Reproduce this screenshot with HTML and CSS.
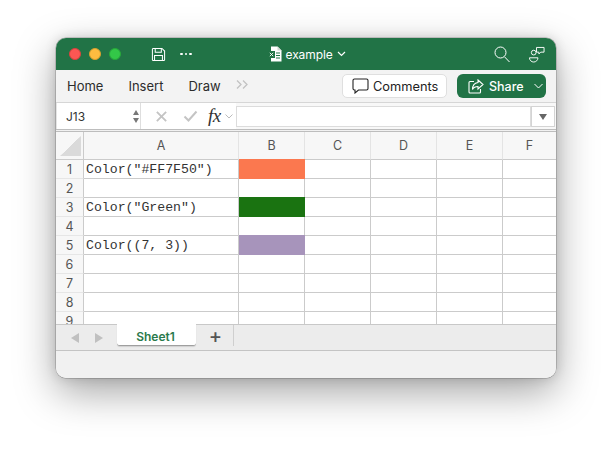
FILE: index.html
```html
<!DOCTYPE html>
<html lang="en">
<head>
<meta charset="utf-8">
<title>example</title>
<link rel="stylesheet" href="styles.css">
</head>
<body>
<div class="window">
  <header class="titlebar">
    <div class="lights"><i class="light red"></i><i class="light amber"></i><i class="light green"></i></div>
    <svg class="save" width="15" height="15" viewBox="0 0 16 16" fill="none" stroke="#fff" stroke-width="1.1"><path d="M1.500 2.500a1 1 0 0 1 1-1h9.200l2.800 2.800v9.200a1 1 0 0 1-1 1h-11a1 1 0 0 1-1-1z"/><path d="M4.500 1.500v4h6.500v-4M3.800 14.500v-5.500h8.400v5.500"/></svg>
    <div class="dots"><i></i><i></i><i></i></div>
    <div class="doc">
      <svg width="14" height="16" viewBox="0 0 14 16"><path d="M3 .5h6.500l4 4v11h-10.500z" fill="#fff"/><path d="M9.500.5v4h4" fill="#cfd8d2"/><path d="M8 7h4M8 9.500h4M8 12h4" stroke="#217346" stroke-width="1"/><rect x="0" y="5" width="7" height="7" fill="#217346"/><path d="M1.800 6.800l3.400 3.400M5.200 6.800l-3.400 3.400" stroke="#fff" stroke-width=".9"/></svg>
      <span class="doc-name">example</span>
      <svg width="9" height="6" viewBox="0 0 9 6" fill="none" stroke="#fff" stroke-width="1.200"><path d="M1 1l3.500 3.500L8 1"/></svg>
    </div>
    <svg class="search" width="16" height="17" viewBox="0 0 16 17" fill="none" stroke="#fff" stroke-width="1"><circle cx="6.500" cy="6.500" r="5.500"/><path d="M10.500 10.800l5 5.200"/></svg>
    <svg class="people" width="16" height="17" viewBox="0 0 17 17" fill="none" stroke="#fff" stroke-width="1"><circle cx="5" cy="6.500" r="2.500"/><path d="M.5 12h9a4.500 4.500 0 0 1-9 0z"/><path d="M8 1h8v5h-3.500l-2 2v-2h-2.500z"/></svg>
  </header>

  <nav class="ribbon">
    <span class="tab-label">Home</span>
    <span class="tab-label">Insert</span>
    <span class="tab-label">Draw</span>
    <svg class="more" width="13" height="9" viewBox="0 0 13 9" fill="none" stroke="#c2c2c2" stroke-width="1.300"><path d="M1 .5l4 4-4 4M7 .5l4 4-4 4"/></svg>
    <button class="comments">
      <svg width="17" height="16" viewBox="0 0 17 16" fill="none" stroke="#222" stroke-width="1.100"><path d="M2.500 1h12a1.500 1.500 0 0 1 1.500 1.500v8a1.500 1.500 0 0 1-1.500 1.500h-8l-3.500 3v-3h-.5a1.500 1.500 0 0 1-1.500-1.500v-8a1.500 1.500 0 0 1 1.500-1.500z"/></svg>
      Comments
    </button>
    <button class="share">
      <svg width="16" height="15" viewBox="0 0 16 15" fill="none" stroke="#fff" stroke-width="1.100"><path d="M6 2.500h-4a1 1 0 0 0-1 1v9.500a1 1 0 0 0 1 1h9.500a1 1 0 0 0 1-1v-3"/><path d="M10 1l5 4.500-5 4.500v-2.500c-3 0-4.500 1-5.500 3 0-4 2-6.500 5.500-7z"/></svg>
      <span>Share</span>
      <svg class="share-caret" width="9" height="6" viewBox="0 0 9 6" fill="none" stroke="#fff" stroke-width="1"><path d="M.5 1l4 4 4-4"/></svg>
    </button>
  </nav>

  <section class="formula">
    <div class="namebox">
      <span>J13</span>
      <div class="stepper"><i class="up"></i><i class="down"></i></div>
    </div>
    <div class="fx-tools">
      <svg width="13" height="13" viewBox="0 0 14 14" stroke="#c4c4c4" stroke-width="2" fill="none"><path d="M2 2l10 10M12 2l-10 10"/></svg>
      <svg width="15" height="14" viewBox="0 0 15 14" stroke="#c4c4c4" stroke-width="2" fill="none"><path d="M1.500 7.500l4 4 8-9"/></svg>
      <span class="fx">fx</span>
      <svg width="8" height="5" viewBox="0 0 8 5" stroke="#bbb" stroke-width="1" fill="none"><path d="M.5.500l3.500 3.500 3.500-3.500"/></svg>
    </div>
    <div class="input"></div>
    <div class="expand"><i></i></div>
  </section>

  <main class="sheet">
    <div class="corner"><i></i></div>
    <div class="ch">A</div><div class="ch">B</div><div class="ch">C</div><div class="ch">D</div><div class="ch">E</div><div class="ch last">F</div>

    <div class="rh">1</div><div class="c mono">Color("#FF7F50")</div><div class="c coral"></div><div class="c"></div><div class="c"></div><div class="c"></div><div class="c last"></div>
    <div class="rh">2</div><div class="c"></div><div class="c"></div><div class="c"></div><div class="c"></div><div class="c"></div><div class="c last"></div>
    <div class="rh">3</div><div class="c mono">Color("Green")</div><div class="c leaf"></div><div class="c"></div><div class="c"></div><div class="c"></div><div class="c last"></div>
    <div class="rh">4</div><div class="c"></div><div class="c"></div><div class="c"></div><div class="c"></div><div class="c"></div><div class="c last"></div>
    <div class="rh">5</div><div class="c mono">Color((7, 3))</div><div class="c lilac"></div><div class="c"></div><div class="c"></div><div class="c"></div><div class="c last"></div>
    <div class="rh">6</div><div class="c"></div><div class="c"></div><div class="c"></div><div class="c"></div><div class="c"></div><div class="c last"></div>
    <div class="rh">7</div><div class="c"></div><div class="c"></div><div class="c"></div><div class="c"></div><div class="c"></div><div class="c last"></div>
    <div class="rh">8</div><div class="c"></div><div class="c"></div><div class="c"></div><div class="c"></div><div class="c"></div><div class="c last"></div>
    <div class="rh">9</div><div class="c"></div><div class="c"></div><div class="c"></div><div class="c"></div><div class="c"></div><div class="c last"></div>
  </main>

  <footer class="tabs">
    <div class="arrows"><i class="prev"></i><i class="next"></i></div>
    <div class="sheet-tab">Sheet1</div>
    <div class="add">+</div>
  </footer>
  <div class="status"></div>
</div>
</body>
</html>
```

FILE: styles.css
```css
* { box-sizing: border-box; }
html, body { margin: 0; padding: 0; background: #fff; }
body { width: 612px; height: 452px; overflow: hidden; padding: 38px 56px 0; font-family: Inter, "Liberation Sans", sans-serif; }
i { display: block; }
button { font-family: inherit; margin: 0; }

.window {
  width: 500px; height: 340px; border-radius: 10px; overflow: hidden; background: #f1f1f1;
  display: flex; flex-direction: column;
  box-shadow: 0 0 0 .5px rgba(0,0,0,.3), 0 14px 40px rgba(0,0,0,.36), 0 0 12px rgba(0,0,0,.14);
}

.titlebar { height: 32px; flex: none; background: #217346; display: flex; align-items: center; padding-left: 13px; color: #fff; }
.lights { display: flex; gap: 8px; }
.light { width: 12px; height: 12px; border-radius: 50%; }
.red { background: #fc5753; border: .5px solid #d9423e; }
.amber { background: #fdbc40; border: .5px solid #d99f2e; }
.green { background: #33c748; border: .5px solid #27a83a; }
.save { margin-left: 30px; }
.dots { display: flex; gap: 2px; margin-left: 14px; }
.dots i { width: 2.500px; height: 2.500px; border-radius: 50%; background: #fff; }
.doc { display: flex; align-items: center; margin-left: 76px; gap: 4px; }
.doc-name { font-size: 12px; letter-spacing: -.1px; }
.search { margin-left: auto; }
.people { margin: 0 11px 0 19px; }

.ribbon { height: 33px; flex: none; background: #f3f3f3; display: flex; align-items: center; padding: 0 10px 0 11px; border-bottom: 1px solid #d6d6d6; }
.tab-label { font-size: 13px; color: #2c2c2c; margin-right: 25px; }
.tab-label:nth-child(3) { margin-right: 15px; }
.more { margin-top: -4px; }
.comments { margin-left: auto; height: 24px; width: 105px; border: 1px solid #dfdfdf; border-radius: 5px; background: #fff; display: flex; align-items: center; gap: 4px; padding: 0 0 0 9px; font-size: 12.800px; color: #222; }
.share { margin-left: 10px; height: 24px; width: 89px; border: 0; border-radius: 6px; background: #217346; color: #fff; display: flex; align-items: center; padding: 0 0 0 11px; gap: 5px; font-size: 12.500px; font-weight: 500; }
.share-caret { margin-left: 5px; }

.formula { height: 27px; flex: none; display: flex; align-items: stretch; background: #f8f8f8; border-bottom: 1px solid #bdbdbd; }
.namebox { width: 85px; background: #fff; border-right: 1px solid #dedede; border-left: 1px solid #e4e4e4; display: flex; align-items: center; justify-content: space-between; padding: 0 1px 0 9px; font-size: 12px; color: #333; }
.stepper { display: flex; flex-direction: column; gap: 3px; }
.stepper i { width: 0; height: 0; border-left: 3.500px solid transparent; border-right: 3.500px solid transparent; }
.stepper .up { border-bottom: 5px solid #777; }
.stepper .down { border-top: 5px solid #777; }
.fx-tools { width: 95px; background: #fff; display: flex; align-items: center; padding-left: 14px; }
.fx-tools svg:nth-child(2) { margin-left: 15px; }
.fx { font-family: "Liberation Serif", serif; font-style: italic; font-size: 19px; color: #333; margin-left: 10px; letter-spacing: -.5px; }
.fx-tools svg:nth-child(4) { margin-left: 4px; }
.input { flex: 1; margin: 3px 0 2px; background: #fff; border: 1px solid #dcdcdc; }
.expand { width: 24px; margin: 3px 1px 2px 0; background: #fff; border: 1px solid #d4d4d4; display: flex; align-items: center; justify-content: center; }
.expand i { width: 0; height: 0; border-left: 4px solid transparent; border-right: 4px solid transparent; border-top: 6px solid #666; }

.sheet { height: 193px; flex: none; overflow: hidden; margin-top: 1px; background: #fff; border-top: 1px solid #bdbdbd; display: grid; grid-template-columns: 28px 155px 66px 66px 66px 66px 53px; grid-template-rows: 28px repeat(9, 19px); }
.corner, .ch, .rh { background: #f7f7f7; border-right: 1px solid #cbcbcb; border-bottom: 1px solid #cbcbcb; color: #555; display: flex; align-items: center; justify-content: center; font-size: 12.500px; }
.rh { border-bottom-color: #e6e6e6; padding-top: 1px; }
.ch { border-right-color: #e4e4e4; }
.ch.last { border-right: 0; }
.corner { position: relative; }
.corner i { position: absolute; left: 4px; top: 4px; width: 21px; height: 20px; background: linear-gradient(to bottom right, transparent 49.500%, #dadada 50.500%); }
.c { background: #fff; border-right: 1px solid #cbcbcb; border-bottom: 1px solid #cbcbcb; }
.c.last { border-right: 0; }
.mono { font-family: "Liberation Mono", monospace; font-size: 13.200px; line-height: 20px; padding-left: 2px; white-space: nowrap; color: #333; }
.coral { background: #fb784f; border-bottom-color: #fb784f; border-right-color: #fb784f; box-shadow: 0 -1px 0 #fb784f; }
.leaf { background: #1a7311; border-bottom-color: #1a7311; border-right-color: #1a7311; box-shadow: 0 -1px 0 #1a7311; }
.lilac { background: #a794bb; border-bottom-color: #a794bb; border-right-color: #a794bb; box-shadow: 0 -1px 0 #a794bb; }

.tabs { height: 26px; flex: none; background: #ececec; border-top: 1px solid #c8c8c8; display: flex; align-items: flex-start; }
.arrows { display: flex; gap: 16px; width: 61px; padding: 8px 0 0 15px; }
.arrows i { width: 0; height: 0; border-top: 5px solid transparent; border-bottom: 5px solid transparent; }
.prev { border-right: 8px solid #c0c0c0; }
.next { border-left: 8px solid #c0c0c0; }
.sheet-tab { width: 79px; height: 22px; margin-top: -1px; padding: 3px 2px 0 0; background: #fff; border-radius: 0 0 3px 3px; border-bottom: 1px solid #9f9f9f; box-shadow: 0 1px 1px rgba(0,0,0,.12); color: #2a7a4c; font-size: 12px; font-weight: 600; display: flex; align-items: center; justify-content: center; }
.add { width: 38px; height: 21px; padding: 1px 0 0 2px; border-right: 1px solid #cfcfcf; font-size: 20px; font-weight: 500; color: #555; line-height: 20px; text-align: center; }

.status { flex: 1; background: #f1f1f1; border-top: 1px solid #c4c4c4; }
```
